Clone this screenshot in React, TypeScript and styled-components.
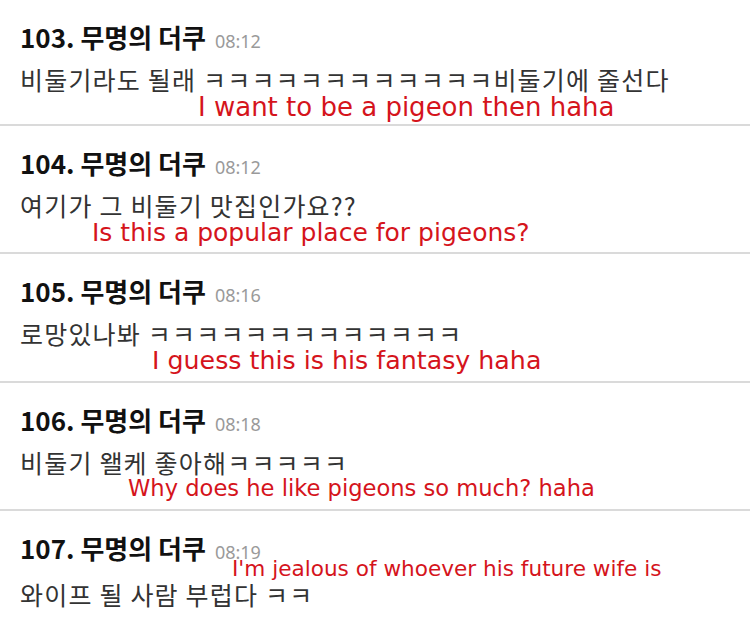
import React from 'react';
import styled, { createGlobalStyle } from 'styled-components';

const GlobalStyle = createGlobalStyle`
  html, body {
    margin: 0;
    padding: 0;
    background: #fff;
  }
  body {
    font-family: "Noto Sans CJK KR", "Noto Sans", sans-serif;
  }
`;

type Comment = {
  no: number;
  author: string;
  time: string;
  text: string;
  note: string;
  noteIndent: number;
  noteSize: number;
  noteFirst?: boolean;
};

const COMMENTS: Comment[] = [
  {
    no: 103,
    author: '무명의 더쿠',
    time: '08:12',
    text: '비둘기라도 될래 ㅋㅋㅋㅋㅋㅋㅋㅋㅋㅋㅋㅋ비둘기에 줄선다',
    note: 'I want to be a pigeon then haha',
    noteIndent: 198,
    noteSize: 26,
  },
  {
    no: 104,
    author: '무명의 더쿠',
    time: '08:12',
    text: '여기가 그 비둘기 맛집인가요??',
    note: 'Is this a popular place for pigeons?',
    noteIndent: 92,
    noteSize: 25,
  },
  {
    no: 105,
    author: '무명의 더쿠',
    time: '08:16',
    text: '로망있나봐 ㅋㅋㅋㅋㅋㅋㅋㅋㅋㅋㅋㅋㅋ',
    note: 'I guess this is his fantasy haha',
    noteIndent: 152,
    noteSize: 25.3,
  },
  {
    no: 106,
    author: '무명의 더쿠',
    time: '08:18',
    text: '비둘기 왤케 좋아해ㅋㅋㅋㅋㅋ',
    note: 'Why does he like pigeons so much? haha',
    noteIndent: 128,
    noteSize: 22.6,
  },
  {
    no: 107,
    author: '무명의 더쿠',
    time: '08:19',
    text: '와이프 될 사람 부럽다 ㅋㅋ',
    note: "I'm jealous of whoever his future wife is",
    noteIndent: 232,
    noteSize: 21.6,
    noteFirst: true,
  },
];

function App() {
  return (
    <>
      <GlobalStyle />
      <List>
        {COMMENTS.map((c) => (
          <Post key={c.no}>
            <Header>
              <Title>{c.no}. {c.author}</Title>
              <Time>{c.time}</Time>
            </Header>
            {c.noteFirst && (
              <Note $indent={c.noteIndent} $size={c.noteSize} $tight>{c.note}</Note>
            )}
            <Body $tight={c.noteFirst}>{c.text}</Body>
            {!c.noteFirst && (
              <Note $indent={c.noteIndent} $size={c.noteSize}>{c.note}</Note>
            )}
          </Post>
        ))}
      </List>
    </>
  );
}

const List = styled.div`
  width: 750px;
  height: 633px;
  overflow: hidden;
  background: #fff;
`;

const Post = styled.div`
  height: 126px;
  padding: 20px 0 0 20px;
  box-sizing: border-box;
  border-bottom: 2px solid #dadada;
  & + & {
    height: 128px;
  }
  &:nth-child(3) {
    height: 129px;
  }
  &:last-child {
    border-bottom: none;
  }
`;

const Header = styled.div`
  display: flex;
  align-items: baseline;
  gap: 9px;
  height: 34px;
`;

const Title = styled.span`
  font-size: 26px;
  font-weight: 700;
  color: #111;
  line-height: 34px;
`;

const Time = styled.span`
  font-size: 18px;
  color: #9a9a9a;
  font-family: "Noto Sans", sans-serif;
`;

const Body = styled.div<{ $tight?: boolean }>`
  margin-top: ${(p) => (p.$tight ? '-3px' : '10px')};
  font-size: 25px;
  letter-spacing: 1.2px;
  line-height: 30px;
  color: #333;
  white-space: nowrap;
`;

const Note = styled.div<{ $indent: number; $size: number; $tight?: boolean }>`
  margin-left: ${(p) => p.$indent - 20}px;
  margin-top: ${(p) => (p.$tight ? '-9px' : '-2px')};
  font-family: "DejaVu Sans", Verdana, sans-serif;
  font-size: ${(p) => p.$size}px;
  line-height: ${(p) => Math.round(p.$size) + 4}px;
  color: #d5141c;
  white-space: nowrap;
`;

export default App;
